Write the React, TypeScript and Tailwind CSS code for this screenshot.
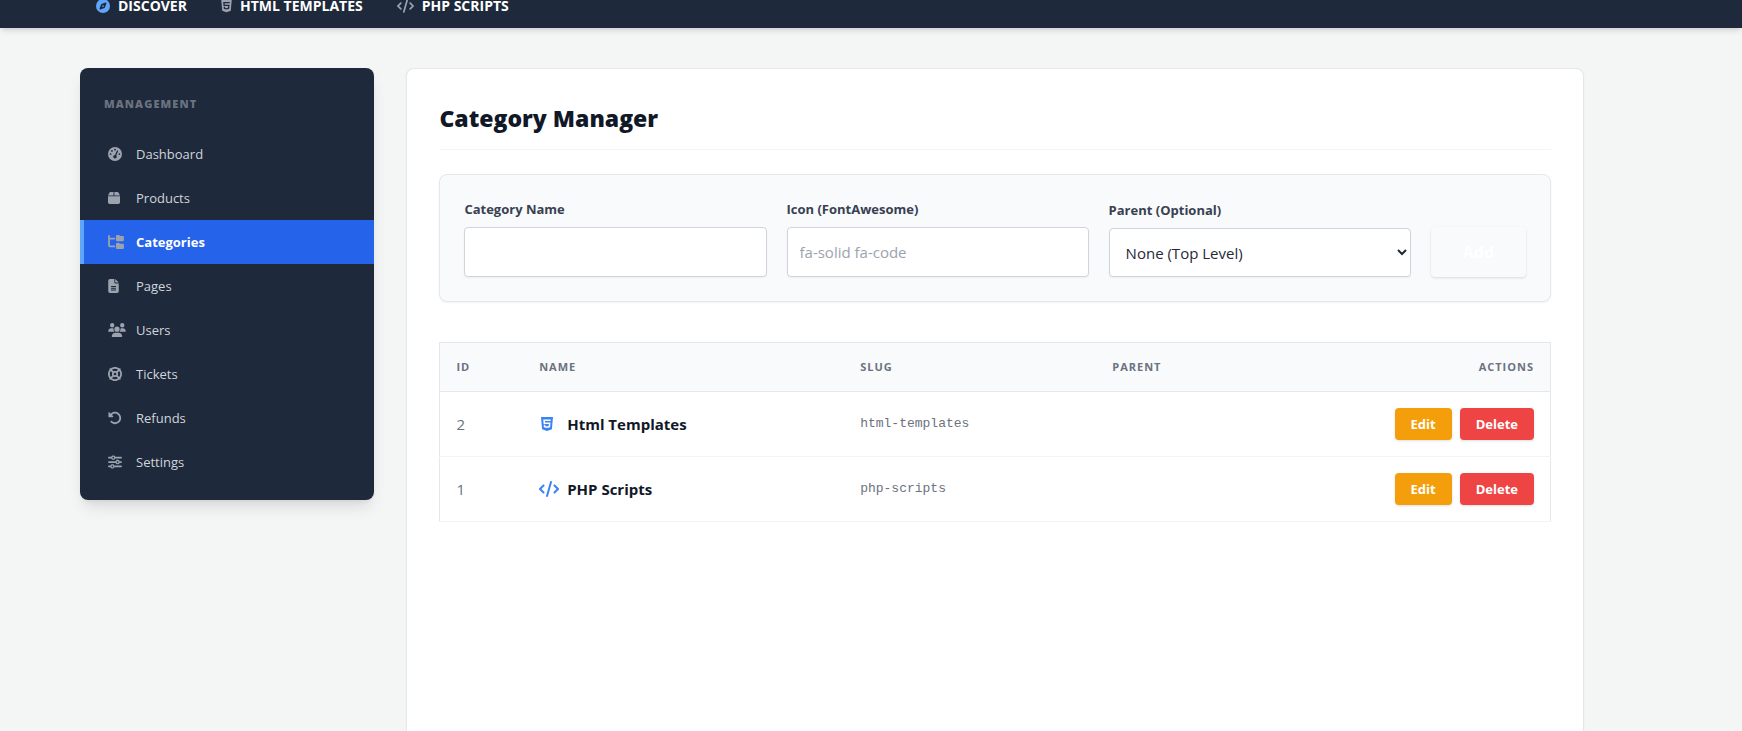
import React, { useState } from 'react'
import type { IconType } from 'react-icons'
import {
  FaBox,
  FaCode,
  FaCompass,
  FaFileLines,
  FaFolderTree,
  FaGaugeHigh,
  FaHtml5,
  FaLifeRing,
  FaRotateLeft,
  FaSliders,
  FaUsers,
} from 'react-icons/fa6'

type Category = {
  id: number
  name: string
  slug: string
  parent: string
  icon: IconType
  iconClass: string
}

const topLinks = [
  { label: 'Discover', icon: FaCompass, iconClass: 'w-[14px] text-[#60a5fa]' },
  { label: 'HTML Templates', icon: FaHtml5, iconClass: 'w-[11px] text-[#9ca3af]' },
  { label: 'PHP Scripts', icon: FaCode, iconClass: 'w-[17px] text-[#9ca3af]' },
]

const sidebarLinks = [
  { label: 'Dashboard', icon: FaGaugeHigh, iconClass: 'w-[14px]' },
  { label: 'Products', icon: FaBox, iconClass: 'w-[12px]' },
  { label: 'Categories', icon: FaFolderTree, iconClass: 'w-[16px]', active: true },
  { label: 'Pages', icon: FaFileLines, iconClass: 'w-[11px]' },
  { label: 'Users', icon: FaUsers, iconClass: 'w-[18px]' },
  { label: 'Tickets', icon: FaLifeRing, iconClass: 'w-[14px]' },
  { label: 'Refunds', icon: FaRotateLeft, iconClass: 'w-[14px]' },
  { label: 'Settings', icon: FaSliders, iconClass: 'w-[14px]' },
]

const categories: Category[] = [
  {
    id: 2,
    name: 'Html Templates',
    slug: 'html-templates',
    parent: '',
    icon: FaHtml5,
    iconClass: 'w-4',
  },
  {
    id: 1,
    name: 'PHP Scripts',
    slug: 'php-scripts',
    parent: '',
    icon: FaCode,
    iconClass: 'w-5',
  },
]

function TopNav() {
  return (
    <nav className="bg-[#1e293b] shadow-md pr-[78px]">
      <div className="flex max-w-screen-2xl mx-auto px-4 pb-4 gap-0.5">
        {topLinks.map(({ label, icon: Icon, iconClass }) => (
          <a
            key={label}
            href="#"
            className="flex items-center h-3 px-4 text-sm leading-3 font-bold uppercase text-white"
          >
            <Icon className={`shrink-0 h-3.5 mr-2 ${iconClass}`} />
            {label}
          </a>
        ))}
      </div>
    </nav>
  )
}

function Sidebar() {
  return (
    <aside className="self-start py-4 rounded-lg bg-[#1e293b] shadow-lg">
      <h2 className="px-6 pt-3 pb-5 text-[11px] leading-4 font-extrabold uppercase tracking-widest text-[#6b7280]">
        Management
      </h2>
      <nav>
        {sidebarLinks.map(({ label, icon: Icon, iconClass, active }) => (
          <a
            key={label}
            href="#"
            className={`flex items-center px-6 py-3 border-l-4 text-[13px] leading-5 ${
              active
                ? 'bg-[#2563eb] border-[#60a5fa] text-white font-bold'
                : 'border-transparent text-[#d1d5db]'
            }`}
          >
            <span className="w-5 mr-2">
              <Icon className={`h-3.5 text-[#9ca3af] ${iconClass}`} />
            </span>
            {label}
          </a>
        ))}
      </nav>
    </aside>
  )
}

function CategoryForm() {
  const [name, setName] = useState('')
  const [icon, setIcon] = useState('')

  const labelClass = 'block mb-2 text-[13px] leading-5 font-bold text-[#374151]'
  const fieldClass =
    'block w-full px-3 text-[15px] leading-6 border border-[#d1d5db] rounded bg-white shadow-xs text-[#1f2937] placeholder:text-[#9ca3af]'

  return (
    <form
      className="flex items-end gap-5 p-6 mb-10 border border-[#e5e7eb] rounded-lg bg-[#f9fafc] shadow-xs"
      onSubmit={(e) => e.preventDefault()}
    >
      <div className="flex-1">
        <label htmlFor="category-name" className={labelClass}>
          Category Name
        </label>
        <input
          id="category-name"
          className={`h-[50px] ${fieldClass}`}
          value={name}
          onChange={(e) => setName(e.target.value)}
        />
      </div>
      <div className="flex-1">
        <label htmlFor="category-icon" className={labelClass}>
          Icon (FontAwesome)
        </label>
        <input
          id="category-icon"
          className={`h-[50px] ${fieldClass}`}
          placeholder="fa-solid fa-code"
          value={icon}
          onChange={(e) => setIcon(e.target.value)}
        />
      </div>
      <div className="flex-1">
        <label htmlFor="category-parent" className={labelClass}>
          Parent (Optional)
        </label>
        <select id="category-parent" className={`h-[49px] ${fieldClass}`}>
          <option>None (Top Level)</option>
          {categories.map((c) => (
            <option key={c.id}>{c.name}</option>
          ))}
        </select>
      </div>
      <button
        type="submit"
        className="px-8 h-[50px] rounded font-bold text-white shadow-sm"
      >
        Add
      </button>
    </form>
  )
}

function CategoryTable() {
  return (
    <table className="w-full table-fixed border-collapse border border-[#e5e7eb] text-left">
      <thead className="bg-[#f9fafc] text-[11px] leading-4 uppercase tracking-[1px] text-[#6b7280]">
        <tr className="border-b border-[#e5e7eb]">
          <th className="w-[7.5%] p-4">ID</th>
          <th className="w-[28.9%] p-4">Name</th>
          <th className="w-[22.7%] p-4">Slug</th>
          <th className="p-4">Parent</th>
          <th className="p-4 text-right">Actions</th>
        </tr>
      </thead>
      <tbody>
        {categories.map(({ id, name, slug, parent, icon: Icon, iconClass }) => (
          <tr key={id} className="border-b border-[#f3f4f6]">
            <td className="p-4 text-[15px] leading-6 text-[#6b7280]">{id}</td>
            <td className="p-4">
              <div className="flex items-center text-[15px] leading-6 font-bold text-[#111827]">
                <span className="w-5 mr-2">
                  <Icon className={`h-4 text-[#3b82f6] ${iconClass}`} />
                </span>
                {name}
              </div>
            </td>
            <td className="p-4 font-['Liberation_Mono',monospace] text-[13px] leading-5 text-[#6b7280]">
              {slug}
            </td>
            <td className="p-4 text-sm text-[#6b7280]">{parent}</td>
            <td className="p-4">
              <div className="flex justify-end gap-2 text-[13px] leading-5 font-bold text-white">
                <button type="button" className="px-4 py-1.5 rounded bg-[#f59e0b] shadow-sm">
                  Edit
                </button>
                <button type="button" className="px-4 py-1.5 rounded bg-[#ef4444] shadow-sm">
                  Delete
                </button>
              </div>
            </td>
          </tr>
        ))}
      </tbody>
    </table>
  )
}

export default function App() {
  return (
    <div className="flex flex-col min-h-screen bg-[#f4f6f6] font-['Open_Sans','Noto_Sans',sans-serif]">
      <TopNav />
      <div className="flex flex-col flex-1 pr-[78px]">
        <div className="grid grid-cols-[1fr_4fr] flex-1 gap-8 w-full max-w-screen-2xl mx-auto px-4 pt-10">
          <Sidebar />
          {/* Panel runs on past the bottom of the window */}
          <main className="p-8 border border-b-0 border-[#e5e7eb] rounded-t-lg bg-white shadow-xs">
            <h1 className="pb-3.5 mb-6 border-b border-[#f3f4f6] text-[23px] leading-[34px] font-extrabold text-[#111827]">
              Category Manager
            </h1>
            <CategoryForm />
            <CategoryTable />
          </main>
        </div>
      </div>
    </div>
  )
}
